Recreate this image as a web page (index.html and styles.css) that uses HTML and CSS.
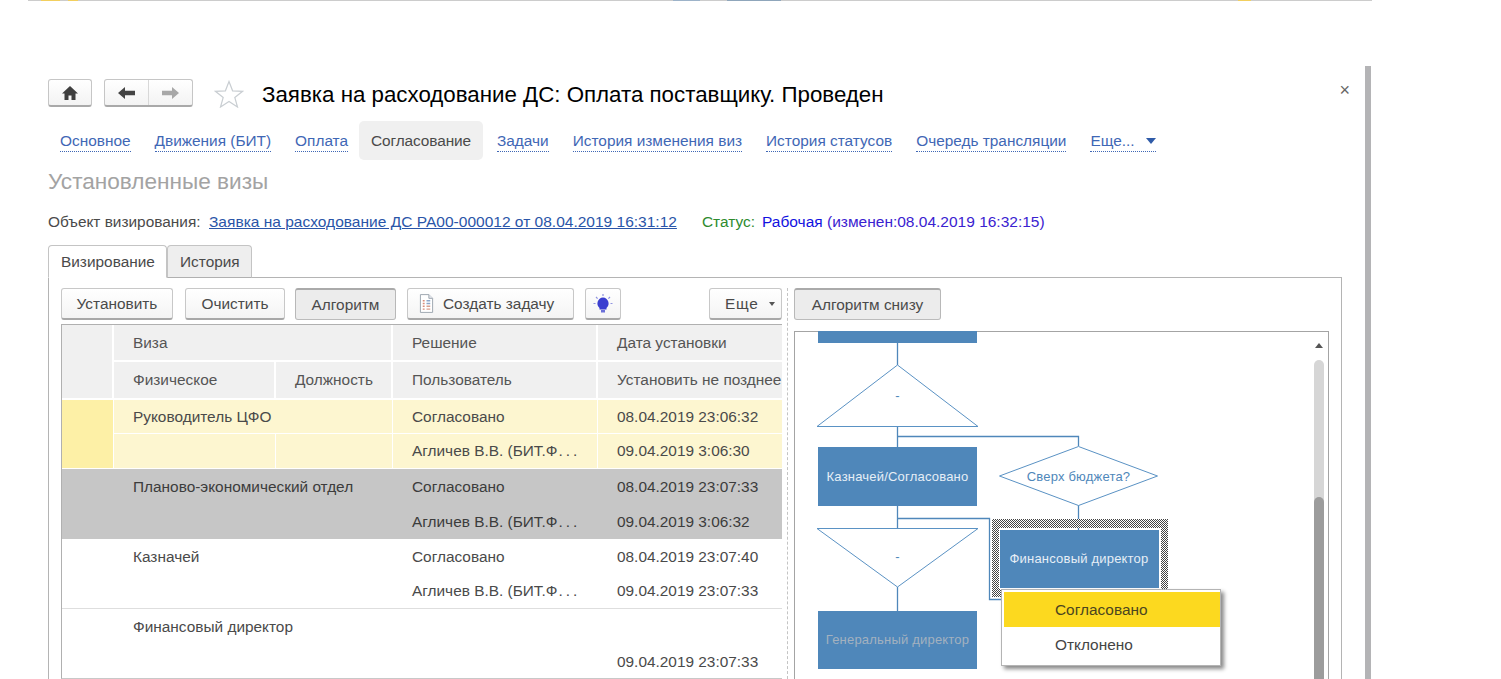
FILE: index.html
```html
<!DOCTYPE html>
<html lang="ru">
<head>
<meta charset="utf-8">
<title>Заявка на расходование ДС</title>
<link rel="stylesheet" href="styles.css">
</head>
<body>
<div class="strip"></div>
<main class="window">
  <header class="head">
    <button class="btn-nav home" aria-label="Домой">
      <svg width="18" height="16" viewBox="0 0 18 16"><path d="M9 1 1 8.500h2.500V15h4v-4.500h3V15h4V8.500H17z" fill="#3f3f3f"/></svg>
    </button>
    <div class="btn-nav pair">
      <span class="half"><svg width="19" height="14" viewBox="0 0 19 14"><path d="M1 7 8 1v3.800h10v4.400H8V13z" fill="#444"/></svg></span>
      <span class="half"><svg width="19" height="14" viewBox="0 0 19 14"><path d="M18 7 11 1v3.800H1v4.400h10V13z" fill="#a8a8a8"/></svg></span>
    </div>
    <svg class="star" width="30" height="28" viewBox="0 0 30 28"><path d="M15 1.500l3.600 9.300 10 .5-7.800 6.200 2.700 9.500L15 21.500 6.500 27l2.700-9.500L1.400 11.300l10-.5z" fill="#fff" stroke="#c9ced2" stroke-width="1.200"/></svg>
    <h1 class="title">Заявка на расходование ДС: Оплата поставщику. Проведен</h1>
    <span class="close">×</span>
  </header>
  <nav class="tabs">
    <a class="tab">Основное</a>
    <a class="tab">Движения (БИТ)</a>
    <a class="tab">Оплата</a>
    <span class="tab active">Согласование</span>
    <a class="tab">Задачи</a>
    <a class="tab">История изменения виз</a>
    <a class="tab">История статусов</a>
    <a class="tab">Очередь трансляции</a>
    <a class="tab">Еще...<i class="tri"></i></a>
  </nav>
  <h2 class="subtitle">Установленные визы</h2>
  <p class="object">
    <span class="obj-label">Объект визирования:</span>
    <a class="obj-link">Заявка на расходование ДС РА00-000012 от 08.04.2019 16:31:12</a>
    <span class="st-label">Статус:</span>
    <span class="st-value">Рабочая <span class="st-date">(изменен:08.04.2019 16:32:15)</span></span>
  </p>
  <div class="page-tabs">
    <span class="ptab on">Визирование</span>
    <span class="ptab">История</span>
  </div>
  <section class="panel">
    <div class="left">
      <div class="toolbar">
        <button class="btn w-set">Установить</button>
        <button class="btn w-clr">Очистить</button>
        <button class="btn pressed w-alg">Алгоритм</button>
        <button class="btn w-task">
          <svg width="15" height="19" viewBox="0 0 16 20"><path d="M1.500.5h9l4 4v15h-13z" fill="#fff" stroke="#9aa3ad"/><path d="M10.500.5v4h4" fill="#e6e9ee" stroke="#9aa3ad"/><path d="M4 7h2M4 10h2M4 13h2M4 16h2" stroke="#d98c7a" stroke-width="1.500"/><path d="M8 7h4M8 10h4" stroke="#8da6c9" stroke-width="1.500"/><path d="M8 13h4M8 16h4" stroke="#d9a08f" stroke-width="1.500"/></svg>
          Создать задачу
        </button>
        <button class="btn w-bulb" aria-label="Подсказка">
          <svg width="20" height="20" viewBox="0 0 20 20"><path d="M10 3.500a6 6 0 0 0-3.500 10.500v1.500h7V14a6 6 0 0 0-3.500-10.500z" fill="#3b3fd0"/><path d="M8 16h4v2.500H8z" fill="#6a6fd8"/><path d="M10 0v2M3 3l1.600 1.600M17 3l-1.600 1.600M0.500 9.500H2.500M19.500 9.500H17.500" stroke="#8f93e0" stroke-width="1.200"/></svg>
        </button>
        <button class="btn w-more"><span class="more-label">Еще</span><i class="tri small"></i></button>
      </div>
      <div class="grid">
        <div class="c hd first r2">&nbsp;</div>
        <div class="c hd s2">Виза</div>
        <div class="c hd">Решение</div>
        <div class="c hd nowrap">Дата установки</div>
        <div class="c hd">Физическое</div>
        <div class="c hd">Должность</div>
        <div class="c hd">Пользователь</div>
        <div class="c hd nowrap">Установить не позднее</div>

        <div class="c y mark r2"></div>
        <div class="c y s2">Руководитель ЦФО</div>
        <div class="c y">Согласовано</div>
        <div class="c y nowrap">08.04.2019 23:06:32</div>
        <div class="c y"></div>
        <div class="c y"></div>
        <div class="c y">Агличев В.В. (БИТ.Ф<span class="dots">...</span></div>
        <div class="c y nowrap">09.04.2019 3:06:30</div>

        <div class="c g r2"></div>
        <div class="c g s2">Планово-экономический отдел</div>
        <div class="c g">Согласовано</div>
        <div class="c g">08.04.2019 23:07:33</div>
        <div class="c g s2"></div>
        <div class="c g">Агличев В.В. (БИТ.Ф<span class="dots">...</span></div>
        <div class="c g">09.04.2019 3:06:32</div>

        <div class="c r2 line"></div>
        <div class="c s2">Казначей</div>
        <div class="c">Согласовано</div>
        <div class="c">08.04.2019 23:07:40</div>
        <div class="c s2 line"></div>
        <div class="c line">Агличев В.В. (БИТ.Ф<span class="dots">...</span></div>
        <div class="c line">09.04.2019 23:07:33</div>

        <div class="c r2"></div>
        <div class="c s2">Финансовый директор</div>
        <div class="c"></div>
        <div class="c"></div>
        <div class="c s2"></div>
        <div class="c"></div>
        <div class="c">09.04.2019 23:07:33</div>
      </div>
    </div>
    <div class="split"></div>
    <div class="right">
      <div class="toolbar">
        <button class="btn pressed w-below">Алгоритм снизу</button>
      </div>
      <div class="canvas">
        <svg class="flow" width="535" height="350" viewBox="794 331 535 350">
          <defs>
            <pattern id="hatch" width="2" height="2" patternUnits="userSpaceOnUse">
              <rect width="2" height="2" fill="#fff"/>
              <rect width="1" height="1" fill="#444"/>
              <rect x="1" y="1" width="1" height="1" fill="#444"/>
            </pattern>
          </defs>
          <rect class="node" x="818" y="331" width="159" height="12"/>
          <path class="ln" d="M897.500 343v22M897.500 426v21M897.500 436.500H1078.500V446M897.500 506v22M897.500 518.500H989.500V599.500H1004M1078.500 505v25M897.500 587v24"/>
          <path class="shape" d="M897.500 365 978 426.500H817z"/>
          <text class="dash" x="897.500" y="400">-</text>
          <rect class="node" x="818" y="447" width="159" height="59"/>
          <text class="nt" x="897.500" y="481">Казначей/Согласовано</text>
          <path class="shape" d="M1078.500 446.500 1157.500 476 1078.500 505.500 999.500 476z"/>
          <text class="qt" x="1078.500" y="481">Сверх бюджета?</text>
          <path fill="url(#hatch)" fill-rule="evenodd" d="M992 519h176v78H992zM999 528v61h162v-61z"/>
          <rect class="node" x="1000" y="530" width="159" height="58"/>
          <text class="nt" x="1079" y="563">Финансовый директор</text>
          <path class="shape" d="M817 528.500H978L897.500 587z"/>
          <text class="dash" x="897.500" y="561">-</text>
          <rect class="node" x="818" y="611" width="159" height="58"/>
          <text class="nt dim" x="897.500" y="644">Генеральный директор</text>
        </svg>
        <div class="scroll">
          <i class="up"></i>
          <div class="track"><div class="thumb"></div></div>
        </div>
        <ul class="menu">
          <li class="item sel">Согласовано</li>
          <li class="item">Отклонено</li>
        </ul>
      </div>
    </div>
  </section>
</main>
</body>
</html>
```
FILE: styles.css
```css
* { box-sizing: border-box; }
html, body { margin: 0; height: 679px; overflow: hidden; background: #fff; }
body { font-family: "Liberation Sans", Arial, sans-serif; font-size: 15.400px; color: #4a4a4a; }
.strip {
  height: 1px; margin: 0 129px 0 28px;
  background: linear-gradient(90deg, #ccc 0 1%, #f2cf5e 1% 2.4%, #ccc 2.4% 3%, #f2cf5e 3% 3.700%, #ccc 3.700% 48%, #9db3c9 48% 50%, #ccc 50% 52%, #8fa6bb 52% 56%, #ccc 56% 90%, #f2cf5e 90% 91%, #ccc 91%);
}
.window {
  width: 1371px; height: 613px; margin-top: 65px; padding: 13px 0 0 48px;
  border-right: 6px solid #b4b4b6; display: flex; flex-direction: column; overflow: hidden;
}
.head { display: flex; align-items: center; height: 28px; }
.btn-nav {
  display: flex; align-items: center; justify-content: center; height: 28px; padding: 0;
  border: 1px solid #c6c6c6; border-bottom: 2px solid #a9a9a9; border-radius: 3px;
  background: linear-gradient(#fff, #f3f3f3);
}
.home { width: 44px; }
.pair { width: 89px; margin-left: 12px; }
.half { flex: 1; display: flex; align-items: center; justify-content: center; height: 100%; }
.half + .half { border-left: 1px solid #d8d8d8; }
.star { margin: 1px 0 0 21px; flex: none; }
.title { margin: 0 0 0 18px; font-size: 22.300px; font-weight: 400; color: #000; white-space: nowrap; line-height: 28px; position: relative; top: 2px; }
.close { margin: -6px 15px 0 auto; font-size: 18px; line-height: 18px; color: #666; }
.tabs { display: flex; height: 39px; margin-top: 14px; }
.tab { display: flex; align-items: center; padding: 0 12px; color: #3f67b5; white-space: nowrap; position: relative; }
a.tab::after { content: ""; position: absolute; left: 12px; right: 12px; bottom: 8px; border-bottom: 1px dotted #3f67b5; }
.tab.active { background: #f0f0f0; border-radius: 5px; color: #4a4a4a; margin: 0 2px 0 -1px; letter-spacing: -.1px; }
.tri { display: inline-block; width: 0; height: 0; margin-left: 11px; border: 5px solid transparent; border-top: 6px solid #2f5ba8; border-bottom: 0; }
.tri.small { margin-left: 10px; border-width: 4px 3.500px 0; border-top-color: #555; }
.subtitle { margin: 9px 0 0; font-size: 22.600px; font-weight: 400; line-height: 26px; color: #a3a3a3; }
.object { margin: 17px 0 0; display: flex; line-height: 20px; white-space: nowrap; }
.obj-label { width: 161px; }
.obj-link { width: 493px; font-size: 15.530px; color: #2a55a8; text-decoration: underline; }
.st-label { width: 60px; color: #2e8b2e; }
.st-value { font-size: 15.500px; color: #1212e0; }
.st-date { color: #3a22d0; }
.page-tabs { display: flex; margin-top: 13px; height: 33px; position: relative; z-index: 1; }
.ptab {
  display: flex; align-items: center; padding: 0 12px; width: 85px; border: 1px solid #c4c4c4; border-bottom: 1px solid #b0b0b0;
  border-radius: 4px 4px 0 0; background: #eee;
}
.ptab.on { width: 119px; background: #fff; border-bottom-color: #fff; }
.panel { display: flex; width: 1294px; margin-top: -1px; padding: 10px 0 0 12px; border: 1px solid #b4b4b4; border-bottom: 0; flex: 1; min-height: 0; }
.left { width: 721px; flex: none; }
.toolbar { display: flex; height: 32px; }
.btn {
  height: 32px; padding: 0; font: 15.400px "Liberation Sans", Arial, sans-serif; color: #4a4a4a;
  border: 1px solid #c8c8c8; border-bottom: 2px solid #a8a8a8; border-radius: 3px; background: linear-gradient(#fff, #f4f4f4);
  display: flex; align-items: center; justify-content: center; gap: 10px; white-space: nowrap;
}
.btn.pressed { background: #ececec; border-color: #b8b8b8; border-top: 2px solid #aaa; border-bottom: 1px solid #bbb; }
.w-set { width: 112px; }
.w-clr { width: 100px; margin-left: 12px; }
.w-alg { width: 101px; margin-left: 10px; }
.w-task { width: 167px; margin-left: 11px; justify-content: flex-start; padding-left: 11px; gap: 9px; }
.w-bulb { width: 36px; margin-left: 11px; }
.w-more { width: 73px; margin-left: auto; justify-content: flex-start; padding-left: 15px; gap: 0; }
.more-label { letter-spacing: .8px; }
.w-below { width: 147px; }
.grid {
  margin-top: 4px; height: 355px; width: 721px; display: grid; border: 1px solid #b0b0b0; border-right: 0; border-bottom: 1px solid #c8c8c8;
  grid-template-columns: 52px 162px 117px 205px 184px;
  grid-template-rows: 37px 38px 34px 35px 35px 35px 35px 35px 35px 35px;
}
.c { padding: 0 0 0 19px; display: flex; align-items: center; white-space: nowrap; overflow: hidden; }
.dots { letter-spacing: 3px; margin-left: 1px; }
.hd { background: #f0f0f0; color: #555; border-right: 2px solid #fff; border-bottom: 2px solid #fff; }
.r2 { grid-row: span 2; }
.s2 { grid-column: span 2; }
.y { background: #fdf6d0; border-right: 1px solid #fff; border-bottom: 1px solid #fff; }
.nowrap { border-right: 0; padding-right: 0; }
.mark { background: #fdf0a6; }
.first { border-bottom: 2px solid #fff; }
.g { background: #c6c6c6; color: #3c3c3c; }
.line { border-bottom: 1px solid #dedede; }
.split { width: 12px; flex: none; position: relative; }
.split::after { content: ""; position: absolute; left: 5px; top: 0; bottom: 0; border-left: 1px dashed #c4c4c4; }
.right { flex: none; width: 535px; }
.canvas { position: relative; margin-top: 11px; width: 535px; height: 360px; border: 1px solid #a4a4a4; border-bottom: 0; }
.flow { position: absolute; left: -1px; top: -1px; display: block; }
.node { fill: #4f87ba; }
.ln { fill: none; stroke: #4f87ba; stroke-width: 1.300; }
.shape { fill: #fff; stroke: #5a92c4; stroke-width: 1; }
.nt { fill: #e6eef6; font-size: 13px; text-anchor: middle; letter-spacing: .2px; }
.nt.dim { fill: #a3b1bf; }
.qt { fill: #4f87ba; font-size: 13px; text-anchor: middle; letter-spacing: .2px; }
.dash { fill: #4f87ba; font-size: 13px; text-anchor: middle; }
.scroll { position: absolute; right: 4px; top: 0; bottom: 0; width: 10px; }
.up { position: absolute; left: 1px; top: 11px; width: 0; height: 0; border: 4px solid transparent; border-bottom: 5px solid #555; border-top: 0; }
.track { position: absolute; top: 28px; bottom: 0; left: 0; width: 10px; background: #d6d6d6; border-radius: 5px 5px 0 0; }
.thumb { position: absolute; top: 137px; bottom: 0; left: 0; width: 10px; background: #9c9c9c; border-radius: 5px 5px 0 0; }
.menu {
  position: absolute; left: 206px; top: 257px; width: 220px; margin: 0; padding: 2px 0 2px 2px; list-style: none;
  background: #fff; border: 1px solid #b4b4b4; box-shadow: 3px 3px 4px #8a8a8a;
}
.item { height: 36px; padding-left: 51px; line-height: 35px; color: #444; }
.item.sel { height: 35px; background: #fcd91f; color: #4b4520; }
```
